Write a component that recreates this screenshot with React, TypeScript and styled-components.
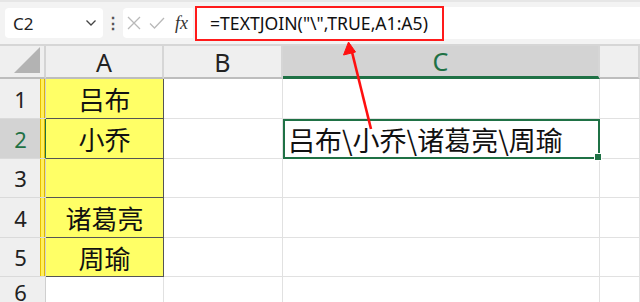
import React from 'react';
import styled, { createGlobalStyle, css } from 'styled-components';

const GlobalStyle = createGlobalStyle`
  html, body {
    margin: 0;
    padding: 0;
    background: #ffffff;
    overflow: hidden;
  }
  body {
    font-family: "Noto Sans", "Noto Sans CJK SC", sans-serif;
  }
`;

const GREEN = '#1f7145';
const GRID = '#e1e1e1';

const Page = styled.div`
  position: relative;
  width: 640px;
  height: 302px;
  overflow: hidden;
  background: #fff;
`;

const FormulaBar = styled.div`
  display: flex;
  align-items: center;
  height: 42px;
  padding: 0 0 0 5px;
  background: #f3f3f3;
  border-top: 2px solid #e6e6e6;
  border-bottom: 2px solid #d6d6d6;
`;

const NameBox = styled.div`
  display: flex;
  align-items: center;
  justify-content: space-between;
  box-sizing: border-box;
  width: 98px;
  height: 30px;
  padding: 0 6px 0 8px;
  background: #fff;
  border-radius: 4px;
  font-size: 17px;
  color: #222;
`;

const Dots = styled.div`
  width: 20px;
  text-align: center;
  color: #555;
  font-size: 16px;
  font-weight: bold;
  line-height: 1;
`;

const ActionBox = styled.div`
  display: flex;
  align-items: center;
  gap: 8px;
  box-sizing: border-box;
  width: 70px;
  height: 30px;
  padding: 0 4px 0 4px;
  background: #fff;
  border-radius: 4px 0 0 4px;
`;

const Fx = styled.span`
  font-family: "Liberation Serif", serif;
  font-style: italic;
  font-size: 18px;
  color: #333;
  margin-left: 2px;
`;

const FormulaField = styled.div`
  flex: 1;
  display: flex;
  align-items: center;
  height: 32px;
  margin-left: 2px;
  background: #fff;
`;

const Marked = styled.div`
  display: flex;
  align-items: center;
  box-sizing: border-box;
  width: 249px;
  height: 35px;
  padding-left: 13px;
  border: 2px solid #ff1a1a;
  font-size: 17.6px;
  color: #111;
  white-space: nowrap;
`;

const Sheet = styled.div`
  display: grid;
  grid-template-columns: 46px 118px 119px 317px 40px;
  grid-template-rows: 33px 40px 40px 39px 40px 39px 30px;
`;

const Corner = styled.div`
  position: relative;
  background: #efefef;
  border-right: 2px solid #d4d4d4;
  border-bottom: 2px solid #bdbdbd;
  box-sizing: border-box;
  &::after {
    content: '';
    position: absolute;
    right: 4px;
    bottom: 4px;
    width: 0;
    height: 0;
    border-left: 26px solid transparent;
    border-bottom: 26px solid #b3b3b3;
  }
`;

const ColHead = styled.div<{ $active?: boolean }>`
  display: flex;
  align-items: center;
  justify-content: center;
  box-sizing: border-box;
  font-size: 25px;
  color: #222;
  background: #efefef;
  border-right: 2px solid #d6d6d6;
  border-bottom: 2px solid #bdbdbd;
  ${(p) =>
    p.$active &&
    css`
      background: #d3d3d3;
      color: ${GREEN};
      border-bottom: 3px solid ${GREEN};
    `}
`;

const RowHead = styled.div<{ $active?: boolean; $marked?: boolean }>`
  display: flex;
  align-items: center;
  justify-content: center;
  box-sizing: border-box;
  padding-right: 4px;
  font-size: 22px;
  color: #222;
  background: #efefef;
  border-right: 1px solid #cfcfcf;
  border-bottom: 1px solid #dadada;
  ${(p) =>
    p.$marked &&
    css`
      box-shadow: inset -1px 0 0 #e0b400, inset -4px 0 0 #ffef5a, inset -5px 0 0 #e8c000;
    `}
  ${(p) =>
    p.$active &&
    css`
      background: #d3d3d3;
      color: ${GREEN};
      border-right: 1px solid ${GREEN};
    `}
`;

const Cell = styled.div<{ $fill?: boolean; $center?: boolean }>`
  display: flex;
  align-items: center;
  justify-content: ${(p) => (p.$center ? 'center' : 'flex-start')};
  box-sizing: border-box;
  font-family: "Noto Sans CJK SC", sans-serif;
  font-size: 26px;
  color: #111;
  white-space: nowrap;
  border-right: 1px solid ${GRID};
  border-bottom: 1px solid ${GRID};
  ${(p) =>
    p.$fill &&
    css`
      background: #ffff66;
      border-right: 1px solid #555;
      border-bottom: 1px solid #555;
    `}
`;

const ActiveCell = styled(Cell)`
  position: relative;
  padding-left: 3px;
  font-size: 27px;
  border: 2px solid ${GREEN};
  overflow: visible;
  &::after {
    content: '';
    position: absolute;
    right: -4px;
    bottom: -4px;
    width: 6px;
    height: 6px;
    background: ${GREEN};
    border: 1px solid #fff;
  }
`;

const Arrow = styled.svg`
  position: absolute;
  left: 0;
  top: 0;
  pointer-events: none;
`;

const names = ['吕布', '小乔', '', '诸葛亮', '周瑜'];

export default function App() {
  return (
    <Page>
      <GlobalStyle />
      <FormulaBar>
        <NameBox>
          <span>C2</span>
          <svg width="12" height="8" viewBox="0 0 12 8">
            <path d="M1.5 1.5 L6 6 L10.5 1.5" fill="none" stroke="#444" strokeWidth="1.3" />
          </svg>
        </NameBox>
        <Dots>⋮</Dots>
        <ActionBox>
          <svg width="14" height="14" viewBox="0 0 14 14">
            <path d="M1 1 L13 13 M13 1 L1 13" stroke="#b9b9b9" strokeWidth="1.3" />
          </svg>
          <svg width="16" height="14" viewBox="0 0 16 14">
            <path d="M1 7.5 L5.5 12 L15 2" fill="none" stroke="#b9b9b9" strokeWidth="1.3" />
          </svg>
          <Fx>fx</Fx>
        </ActionBox>
        <FormulaField>
          <Marked>=TEXTJOIN("\",TRUE,A1:A5)</Marked>
        </FormulaField>
      </FormulaBar>
      <Sheet>
        <Corner />
        <ColHead>A</ColHead>
        <ColHead>B</ColHead>
        <ColHead $active>C</ColHead>
        <ColHead />
        {names.map((n, i) => (
          <React.Fragment key={i}>
            <RowHead $marked $active={i === 1}>
              {i + 1}
            </RowHead>
            <Cell $fill $center>
              {n}
            </Cell>
            <Cell />
            {i === 1 ? <ActiveCell>吕布\小乔\诸葛亮\周瑜</ActiveCell> : <Cell />}
            <Cell />
          </React.Fragment>
        ))}
        <RowHead>6</RowHead>
        <Cell />
        <Cell />
        <Cell />
        <Cell />
      </Sheet>
      <Arrow width="640" height="302" viewBox="0 0 640 302">
        <line x1="371" y1="129" x2="352" y2="52" stroke="#ff1010" strokeWidth="2.6" />
        <path d="M348.5 42 L343.5 55 L355.5 52 Z" fill="#ff1010" stroke="#ff1010" strokeWidth="1" />
      </Arrow>
    </Page>
  );
}
